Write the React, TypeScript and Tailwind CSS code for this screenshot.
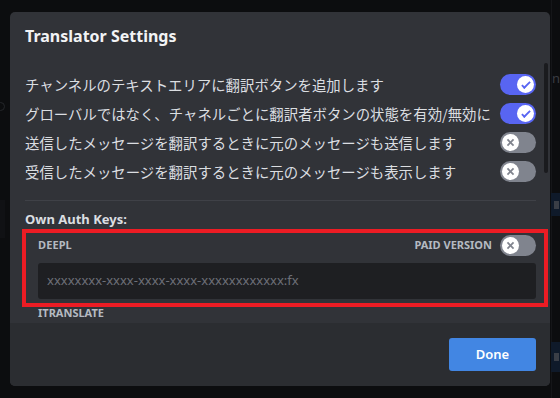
import React from "react";

const CheckIcon = () => (
  <svg width="16" height="16" viewBox="0 0 20 20" fill="none">
    <path d="M7.89561 14.8538L6.30462 13.2629L14.3099 5.25755L15.9009 6.84854L7.89561 14.8538Z" fill="#5865f2" />
    <path d="M4.08643 11.0903L5.67742 9.49929L9.4485 13.2704L7.85751 14.8614L4.08643 11.0903Z" fill="#5865f2" />
  </svg>
);

const XIcon = () => (
  <svg width="15" height="15" viewBox="0 0 20 20" fill="none">
    <path d="M5.13231 6.72963L6.7233 5.13864L14.855 13.2704L13.264 14.8614L5.13231 6.72963Z" fill="#80848e" />
    <path d="M13.2704 5.13864L14.8614 6.72963L6.72963 14.8614L5.13864 13.2704L13.2704 5.13864Z" fill="#80848e" />
  </svg>
);

function Toggle({ on }: { on: boolean }) {
  return (
    <div
      className={
        "w-[36px] h-[21px] rounded-full flex items-center px-[2px] shrink-0 " +
        (on ? "bg-[#5865f2] justify-end" : "bg-[#80848e] justify-start")
      }
    >
      <div className="w-[17px] h-[17px] rounded-full bg-white flex items-center justify-center">
        {on ? <CheckIcon /> : <XIcon />}
      </div>
    </div>
  );
}

const rows: { text: string; on: boolean }[] = [
  { text: "チャンネルのテキストエリアに翻訳ボタンを追加します", on: true },
  { text: "グローバルではなく、チャネルごとに翻訳者ボタンの状態を有効/無効に", on: true },
  { text: "送信したメッセージを翻訳するときに元のメッセージも送信します", on: false },
  { text: "受信したメッセージを翻訳するときに元のメッセージも表示します", on: false },
];

const sans = "font-['Noto_Sans','Noto_Sans_CJK_JP',sans-serif]";
const jp = "font-['Noto_Sans_CJK_JP','Noto_Sans',sans-serif]";

export default function App() {
  return (
    <div className={"relative w-[560px] h-[398px] bg-[#0c0d0f] overflow-hidden pt-[12px] pl-[10px] " + sans}>
      {/* backdrop remnants */}
      <div className="absolute left-[551px] top-[0px] w-px h-[398px] bg-[#151619]" />
      <div className="absolute left-[552px] top-[68px] text-[13px] leading-[20px] text-[#3a3c42]">ng</div>
      <div className="absolute left-[551px] top-[193px] w-[12px] h-[23px] bg-[#0f1a2a] flex items-center pl-[3px]">
        <div className="w-[5px] h-[8px] bg-[#3a3e46]" />
      </div>
      <div className="absolute left-[551px] top-[342px] w-[12px] h-[30px] bg-[#0f1a2a] flex items-center pl-[3px]">
        <div className="w-[5px] h-[8px] bg-[#3a3e46]" />
      </div>
      <div className="absolute left-[-4px] top-[102px] w-[9px] h-[9px] rounded-full border border-[#24262a]" />
      <div className="absolute left-[0px] top-[200px] w-[5px] h-[38px] bg-[#101114]" />

      <div className="relative w-[540px] h-[374px] rounded-[5px] bg-[#313338] flex flex-col overflow-hidden">
        <div className="px-[15px] pt-[12px] pb-[12px]">
          <div className="text-[16px] leading-[24px] font-bold text-[#f2f3f5]">Translator Settings</div>
        </div>

        <div className="relative flex-1 overflow-hidden">
          <div className="absolute right-[2px] top-[3px] w-[4px] h-[110px] rounded-full bg-[#1a1b1e]" />
          <div className="pl-[15px] pr-[14px] pt-[10px] flex flex-col">
            {rows.map((r) => (
              <div key={r.text} className="h-[29px] flex items-center justify-between">
                <span className={"text-[14.4px] leading-[20px] text-[#dbdee1] whitespace-nowrap " + jp}>{r.text}</span>
                <Toggle on={r.on} />
              </div>
            ))}
            <div className="mt-[14px] h-px bg-[#3f4147]" />
            <div className="mt-[8px] text-[13px] leading-[20px] font-bold text-[#dbdee1]">Own Auth Keys:</div>
            <div className="relative ml-[13px] mt-[6px]">
              <div className="h-[21px] flex items-center justify-between">
                <span className="text-[11px] font-bold text-[#b5bac1] tracking-[0.1px]">DEEPL</span>
                <div className="flex items-center gap-[8px]">
                  <span className="text-[11px] font-bold text-[#b5bac1]">PAID VERSION</span>
                  <Toggle on={false} />
                </div>
              </div>
              <div className="mt-[7px] h-[36px] rounded-[3px] bg-[#1e1f22] flex items-center pl-[9px]">
                <span className="text-[13px] text-[#6d6f78]">xxxxxxxx-xxxx-xxxx-xxxx-xxxxxxxxxxxx:fx</span>
              </div>
              <div className="absolute -top-[6px] -bottom-[8px] -left-[16px] -right-[12px] border-4 border-[#ec1c24] pointer-events-none" />
            </div>
            <div className="ml-[13px] mt-[4px] text-[11px] leading-[20px] font-bold text-[#b5bac1]">ITRANSLATE</div>
          </div>
        </div>

        <div className="h-[63px] bg-[#2b2d31] flex items-center justify-end pr-[14px] shrink-0">
          <button className="w-[87px] h-[33px] rounded-[3px] bg-[#4286e3] text-white text-[13px] font-semibold">
            Done
          </button>
        </div>
      </div>
    </div>
  );
}
